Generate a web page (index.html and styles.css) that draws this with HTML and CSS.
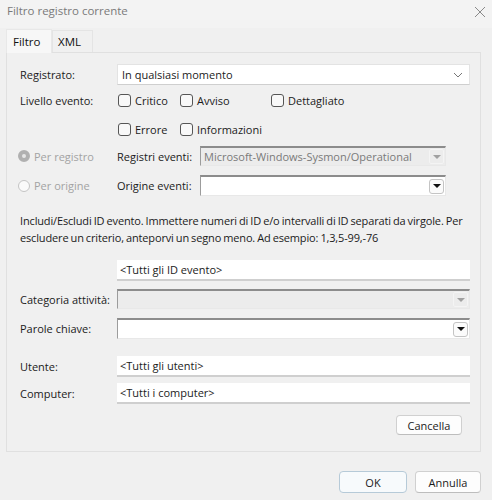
FILE: index.html
```html
<!DOCTYPE html>
<html lang="it">
<head>
<meta charset="utf-8">
<link rel="stylesheet" href="styles.css">
</head>
<body>
<div class="window">
  <div class="titlebar">
    <span class="title">Filtro registro corrente</span>
    <svg class="close" width="12" height="12" viewBox="0 0 12 12"><path d="M1 1L11 11M11 1L1 11" stroke="#8a8a8a" stroke-width="1"/></svg>
  </div>
  <div class="tabs">
    <div class="tab active">Filtro</div>
    <div class="tab">XML</div>
  </div>
  <div class="panel">
    <div class="row r-registrato">
      <span class="label">Registrato:</span>
      <div class="select">
        <span>In qualsiasi momento</span>
        <svg width="10" height="6" viewBox="0 0 10 6"><path d="M1 1L5 5L9 1" fill="none" stroke="#777" stroke-width="1"/></svg>
      </div>
    </div>
    <div class="row r-livello">
      <span class="label">Livello evento:</span>
      <div class="checks">
        <label class="chk c1"><span class="box"></span>Critico</label>
        <label class="chk c2"><span class="box"></span>Avviso</label>
        <label class="chk c3"><span class="box"></span>Dettagliato</label>
      </div>
    </div>
    <div class="row r-livello2">
      <span class="label"></span>
      <div class="checks">
        <label class="chk c1"><span class="box"></span>Errore</label>
        <label class="chk c2"><span class="box"></span>Informazioni</label>
      </div>
    </div>
    <div class="row r-radio1">
      <span class="radio-lbl"><span class="radio checked"></span>Per registro</span>
      <span class="sublabel">Registri eventi:</span>
      <div class="combo disabled">
        <span>Microsoft-Windows-Sysmon/Operational</span>
        <span class="arrow"><svg width="8" height="4" viewBox="0 0 8 4"><path d="M0 0H8L4 4Z" fill="#a0a0a0"/></svg></span>
      </div>
    </div>
    <div class="row r-radio2">
      <span class="radio-lbl"><span class="radio"></span>Per origine</span>
      <span class="sublabel">Origine eventi:</span>
      <div class="combo">
        <span></span>
        <span class="arrow btn"><svg width="8" height="4" viewBox="0 0 8 4"><path d="M0 0H8L4 4Z" fill="#111"/></svg></span>
      </div>
    </div>
    <p class="desc">Includi/Escludi ID evento. Immettere numeri di ID e/o intervalli di ID separati da virgole. Per escludere un criterio, anteporvi un segno meno. Ad esempio: 1,3,5-99,-76</p>
    <div class="row r-id">
      <span class="label"></span>
      <div class="text">&lt;Tutti gli ID evento&gt;</div>
    </div>
    <div class="row r-cat">
      <span class="label">Categoria attività:</span>
      <div class="combo wide disabled">
        <span></span>
        <span class="arrow"><svg width="8" height="4" viewBox="0 0 8 4"><path d="M0 0H8L4 4Z" fill="#a0a0a0"/></svg></span>
      </div>
    </div>
    <div class="row r-parole">
      <span class="label">Parole chiave:</span>
      <div class="combo wide">
        <span></span>
        <span class="arrow btn"><svg width="8" height="4" viewBox="0 0 8 4"><path d="M0 0H8L4 4Z" fill="#111"/></svg></span>
      </div>
    </div>
    <div class="row r-utente">
      <span class="label">Utente:</span>
      <div class="text">&lt;Tutti gli utenti&gt;</div>
    </div>
    <div class="row r-computer">
      <span class="label">Computer:</span>
      <div class="text">&lt;Tutti i computer&gt;</div>
    </div>
    <div class="row r-cancella">
      <button class="button cancella">Cancella</button>
    </div>
  </div>
  <div class="footer">
    <button class="button ok">OK</button>
    <button class="button annulla">Annulla</button>
  </div>
</div>
</body>
</html>
```
FILE: styles.css
```css
* { box-sizing: border-box; }
html, body { margin: 0; padding: 0; }
body {
  width: 492px;
  height: 500px;
  background: #f0f0f0;
  font-family: "Open Sans", "Liberation Sans", sans-serif;
  font-size: 11px;
  color: #1b1b1b;
  overflow: hidden;
}
.window { width: 492px; height: 500px; display: flex; flex-direction: column; }
.titlebar {
  height: 28px;
  background: #f3f3f3;
  display: flex;
  align-items: flex-start;
  justify-content: space-between;
  padding: 3px 6px 0 7px;
}
.title { color: #7a7a7a; font-size: 11.5px; }
.close { margin-top: 3px; }
.tabs {
  height: 24px;
  display: flex;
  align-items: flex-end;
  padding-left: 6px;
}
.tab {
  height: 22px;
  padding: 0 10px;
  display: flex;
  align-items: center;
  font-size: 11.5px;
  color: #111;
  border: 1px solid #e4e4e4;
  border-bottom: none;
  background: #f0f0f0;
}
.tab.active {
  height: 24px;
  width: 46px;
  background: #f7f7f7;
  border-color: #e8e8e8;
  margin-bottom: -1px;
  padding-left: 6px;
  position: relative;
  z-index: 1;
}
.tab:not(.active) { width: 41px; padding-left: 5px; }
.panel {
  margin: 0 11px 0 6px;
  height: 400px;
  border: 1px solid #e0e0e0;
  background: #f0f0f0;
  padding: 11px 10px 0 13px;
  display: flex;
  flex-direction: column;
}
.row { display: flex; align-items: center; }
.label { width: 97px; flex: none; }
.select {
  flex: 1;
  height: 21px;
  background: #fff;
  border: 1px solid #e3e3e3;
  border-bottom-color: #cfcfcf;
  display: flex;
  align-items: center;
  justify-content: space-between;
  padding: 0 6px 0 4px;
}
.r-registrato { height: 21px; }
.r-livello { height: 18px; margin-top: 6px; }
.r-livello2 { height: 18px; margin-top: 11px; }
.checks { position: relative; flex: 1; height: 18px; }
.chk {
  position: absolute;
  top: 0;
  height: 18px;
  display: flex;
  align-items: center;
  gap: 4px;
}
.chk.c1 { left: 1px; }
.chk.c2 { left: 63px; }
.chk.c3 { left: 154px; }
.box {
  width: 13px;
  height: 13px;
  border: 1px solid #555;
  border-radius: 3px;
  background: #f8f8f8;
}
.r-radio1 { height: 20px; margin-top: 8px; }
.r-radio2 { height: 21px; margin-top: 9px; }
.radio-lbl {
  width: 97px;
  flex: none;
  display: flex;
  align-items: center;
  gap: 4px;
  color: #a3a3a3;
  margin-left: -2px;
  padding-right: 0;
}
.radio {
  width: 12px;
  height: 12px;
  border-radius: 50%;
  border: 1px solid #c4c4c4;
  background: #fafafa;
}
.radio.checked {
  border: 4px solid #b0b0b0;
  background: #e6e6e6;
}
.sublabel { width: 83px; flex: none; margin-left: 2px; }
.combo {
  flex: none;
  width: 246px;
  height: 100%;
  background: #fff;
  border-top: 2px solid #8c8c8c;
  border-left: 1px solid #9c9c9c;
  border-right: 1px solid #e8e8e8;
  border-bottom: 1px solid #e8e8e8;
  display: flex;
  align-items: center;
  justify-content: space-between;
  padding-left: 3px;
  padding-right: 1px;
}
.combo.wide { flex: 1; width: auto; }
.combo.disabled { background: #ececec; color: #7a7a7a; }
.arrow {
  width: 15px;
  height: 15px;
  display: flex;
  align-items: center;
  justify-content: center;
}
.arrow.btn {
  border: 1px solid #c4c4c4;
  border-radius: 3px;
  background: #fbfbfb;
}
.disabled .arrow { border: 1px solid #f4f4f4; border-radius: 2px; }
.desc {
  margin: 16px 0 0 0;
  line-height: 17px;
  letter-spacing: -0.15px;
  word-spacing: -0.6px;
}
.r-id { height: 21px; margin-top: 14px; }
.text {
  flex: 1;
  height: 100%;
  background: #fff;
  border-bottom: 2px solid #cfcfcf;
  display: flex;
  align-items: center;
  padding-left: 3px;
}
.r-cat { height: 20px; margin-top: 8px; }
.r-parole { height: 21px; margin-top: 9px; }
.r-utente { height: 21px; margin-top: 17px; }
.r-computer { height: 21px; margin-top: 6px; }
.r-cancella { justify-content: flex-end; margin-top: 11px; padding-right: 8px; }
.button {
  font-family: inherit;
  font-size: 11px;
  color: #1b1b1b;
  background: #fdfdfd;
  border: 1px solid #d0d0d0;
  border-bottom-color: #bdbdbd;
  border-radius: 4px;
  height: 20px;
  padding: 0;
}
.cancella { width: 66px; }
.footer {
  display: flex;
  justify-content: flex-end;
  gap: 8px;
  padding: 19px 11px 0 0;
}
.ok {
  width: 68px;
  height: 22px;
  border: 1px solid #b6cad8;
  background: #f7fafc;
}
.annulla { width: 66px; height: 22px; }
```
